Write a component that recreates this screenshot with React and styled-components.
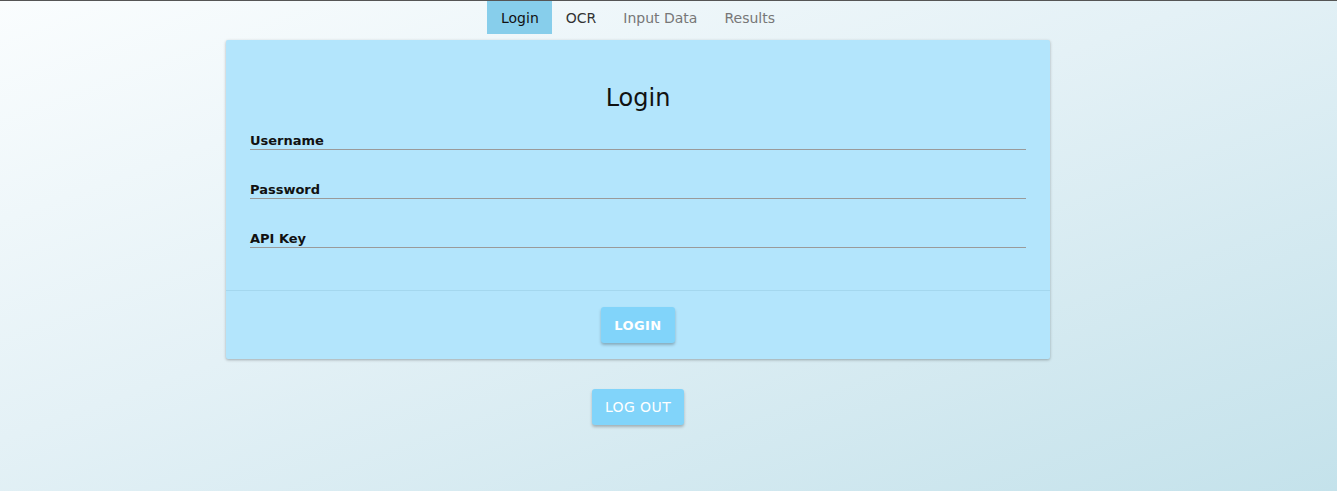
import React, { useState } from "react";
import styled, { createGlobalStyle } from "styled-components";

const GlobalStyle = createGlobalStyle`
  html, body {
    margin: 0;
    padding: 0;
  }
  body {
    min-height: 100vh;
    border-top: 1px solid #555;
    box-sizing: border-box;
    font-family: "DejaVu Sans", Verdana, sans-serif;
    background: linear-gradient(160deg, #fafdfe 0%, #e4f1f6 45%, #c4e2eb 100%);
    background-attachment: fixed;
  }
`;

const tabs = ["Login", "OCR", "Input Data", "Results"];

const App = () => {
  const [active, setActive] = useState("Login");

  return (
    <>
      <GlobalStyle />
      <Page>
        <TabBar>
          {tabs.map((t, i) => (
            <Tab
              key={t}
              $active={active === t}
              $dim={i > 1}
              onClick={() => setActive(t)}
            >
              {t}
            </Tab>
          ))}
        </TabBar>

        <Card>
          <CardBody>
            <Title>Login</Title>
            <Field>
              <Label htmlFor="username">Username</Label>
              <Input id="username" type="text" />
            </Field>
            <Field>
              <Label htmlFor="password">Password</Label>
              <Input id="password" type="password" />
            </Field>
            <Field>
              <Label htmlFor="apikey">API Key</Label>
              <Input id="apikey" type="text" />
            </Field>
          </CardBody>
          <CardFooter>
            <Button $bold>LOGIN</Button>
          </CardFooter>
        </Card>

        <LogoutRow>
          <Button $size={14}>LOG OUT</Button>
        </LogoutRow>
      </Page>
    </>
  );
};

const Page = styled.div`
  display: flex;
  flex-direction: column;
  align-items: center;
  padding-right: 61px;
`;

const TabBar = styled.nav`
  display: flex;
  height: 33px;
`;

const Tab = styled.div`
  display: flex;
  align-items: center;
  padding: 0 13.5px;
  font-size: 14px;
  cursor: pointer;
  background: ${(p) => (p.$active ? "#87ceeb" : "transparent")};
  color: ${(p) => (p.$active ? "#111" : p.$dim ? "#777" : "#333")};
`;

const Card = styled.div`
  width: 824px;
  margin-top: 6px;
  background: #b3e5fc;
  border-radius: 2px;
  box-shadow: 0 1px 3px rgba(0, 0, 0, 0.3);
`;

const CardBody = styled.div`
  padding: 42px 24px 42px;
  display: flex;
  flex-direction: column;
  gap: 32px;
  border-bottom: 1px solid #a4d7ee;
`;

const Title = styled.h2`
  margin: 0 0 -13px;
  text-align: center;
  font-size: 24px;
  font-weight: normal;
  line-height: 32px;
  color: #111;
`;

const Field = styled.div`
  display: flex;
  flex-direction: column;
`;

const Label = styled.label`
  font-size: 13px;
  font-weight: bold;
  line-height: 16px;
  color: #111;
`;

const Input = styled.input`
  height: 0;
  padding: 0;
  border: none;
  border-bottom: 1px solid #9a9a9a;
  background: transparent;
  outline: none;
`;

const CardFooter = styled.div`
  display: flex;
  justify-content: center;
  padding: 16px 0 16px;
`;

const Button = styled.button`
  height: 36px;
  padding: 0 13px;
  border: none;
  border-radius: 3px;
  background: #81d4fa;
  color: #fff;
  font-family: "DejaVu Sans", Verdana, sans-serif;
  font-size: ${(p) => p.$size || 13}px;
  font-weight: ${(p) => (p.$bold ? "bold" : "normal")};
  letter-spacing: 0.4px;
  box-shadow: 0 2px 3px rgba(0, 0, 0, 0.25);
  cursor: pointer;
`;

const LogoutRow = styled.div`
  margin-top: 30px;
`;

export default App;
